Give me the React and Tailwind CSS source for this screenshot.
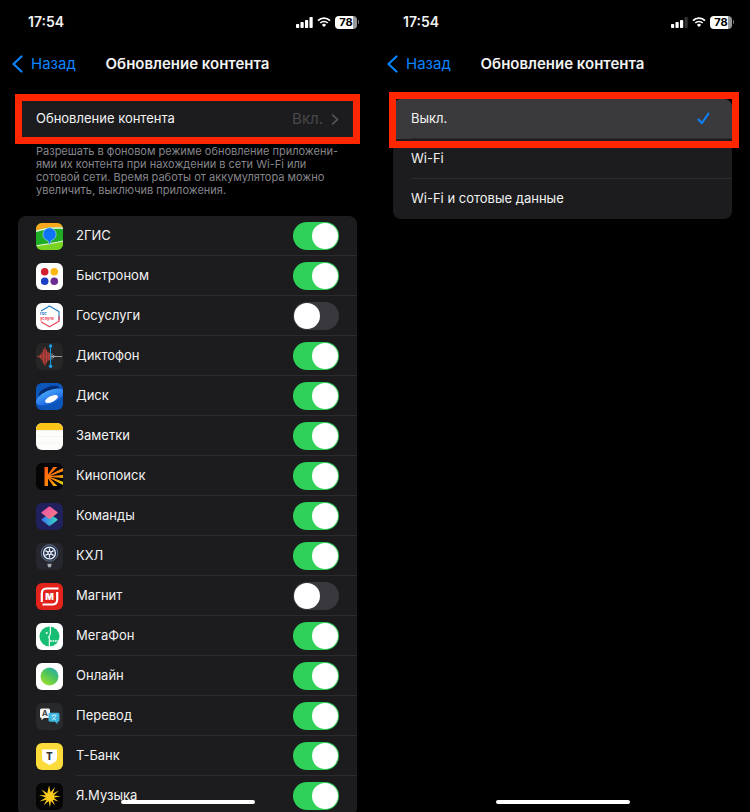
import React, { useState } from 'react';

const TwoGisIcon = () => (
    <svg viewBox="0 0 27 27" className="w-full h-full" aria-hidden="true">
        <rect width="27" height="27" fill="#1fad25" />
        <path d="M0 0h27v4.5C18 3.5 8 4.5 0 7.5z" fill="#fba81c" />
        <path d="M0 7.5C8 4.5 18 3.5 27 4.5v1.500C18 5 8 6 0 9z" fill="#f4f9e6" />
        <path d="M0 23.500C8 21 18 20.500 27 18.500V27H0z" fill="#7ad321" />
        <path d="M0 22.500C8 20.500 18 20 27 17.500v1C18 21 8 21.500 0 23.500z" fill="#f4f9e6" />
        <path d="M13.500 4.800a6.600 6.600 0 0 0-6.600 6.600c0 3.200 2.300 5.200 4.400 6 1.100.4 1.300 1.600 1.400 3.800h1.600c.1-2.200.3-3.400 1.400-3.800 2.100-.8 4.400-2.800 4.400-6a6.600 6.600 0 0 0-6.600-6.600z" fill="#0d74f5" stroke="#a9d4e8" strokeWidth="0.700" />
    </svg>
);

const BystronomIcon = () => (
    <svg viewBox="0 0 27 27" className="w-full h-full" aria-hidden="true">
        <rect width="27" height="27" fill="#fff" />
        <circle cx="8.700" cy="8.700" r="3.800" fill="#d0202f" />
        <circle cx="18.300" cy="8.700" r="3.800" fill="#fbb811" />
        <circle cx="8.700" cy="18.300" r="3.800" fill="#1b3fc4" />
        <circle cx="18.300" cy="18.300" r="3.800" fill="#6b2c91" />
    </svg>
);

const GosuslugiIcon = () => (
    <svg viewBox="0 0 27 27" className="w-full h-full" aria-hidden="true">
        <rect width="27" height="27" fill="#fff" />
        <path d="M5 8l8.500-5 9.500 5.500v9" fill="none" stroke="#1c78c4" strokeWidth="1.100" strokeLinejoin="round" />
        <path d="M23 13v5.200l-9.500 5.500L5 18.800" fill="none" stroke="#ee3f58" strokeWidth="1.100" strokeLinejoin="round" />
        <text x="4" y="11.500" fontSize="4" fontWeight="700" fontFamily="Inter, sans-serif" fill="#1c78c4">гос</text>
        <text x="4" y="16.700" fontSize="4" fontWeight="700" fontFamily="Inter, sans-serif" fill="#ee3f58">услуги</text>
    </svg>
);

const VoiceMemosIcon = () => (
    <svg viewBox="0 0 27 27" className="w-full h-full" aria-hidden="true">
        <rect width="27" height="27" fill="#262626" />
        <path d="M0 13.500h27" stroke="#6b3633" strokeWidth="0.800" />
        <path d="M3 12.500v2M4.500 11.500v4M6 9.500v8M7.500 6.500v14M9 4.500v18M10.500 7v13M12 9v9M13.300 10v7" stroke="#bd403a" strokeWidth="1.200" />
        <path d="M16 10.500v6M17.500 12v3M19 12.800v1.400M14.500 13.500H26" stroke="#a9a9a9" strokeWidth="0.900" />
        <path d="M14.600 3v21" stroke="#1c9ee8" strokeWidth="1" />
        <circle cx="14.600" cy="3" r="1.700" fill="#1c9ee8" />
        <circle cx="14.600" cy="23.300" r="1.700" fill="#1c9ee8" />
    </svg>
);

const DiskIcon = () => (
    <svg viewBox="0 0 27 27" className="w-full h-full" aria-hidden="true">
        <defs>
            <linearGradient id="disk-body" x1="0" y1="0" x2="0" y2="1">
                <stop offset="0" stopColor="#45a2fb" />
                <stop offset="1" stopColor="#1a63df" />
            </linearGradient>
        </defs>
        <rect width="27" height="27" fill="#0c56bb" />
        <ellipse cx="13" cy="8.500" rx="11" ry="4.500" transform="rotate(-20 13 8.500)" fill="#062c73" />
        <ellipse cx="14" cy="14" rx="15" ry="6.600" transform="rotate(-24 14 14)" fill="url(#disk-body)" />
        <ellipse cx="15.500" cy="16" rx="7" ry="3" transform="rotate(-26 15.500 16)" fill="#fff" />
    </svg>
);

const NotesIcon = () => (
    <svg viewBox="0 0 27 27" className="w-full h-full" aria-hidden="true">
        <rect width="27" height="27" fill="#fdfdfb" />
        <rect width="27" height="7" fill="#fcc419" />
        <path d="M0 7.500h27" stroke="#d9d4c4" strokeWidth="0.600" strokeDasharray="1 1" />
        <path d="M0 13.500h27M0 20h27" stroke="#ececea" strokeWidth="0.500" />
    </svg>
);

const KinopoiskIcon = () => (
    <svg viewBox="0 0 27 27" className="w-full h-full" aria-hidden="true">
        <defs>
            <linearGradient id="kinopoisk-rays" gradientUnits="userSpaceOnUse" x1="9" y1="4" x2="27" y2="23">
                <stop offset="0" stopColor="#ff5a12" />
                <stop offset="0.600" stopColor="#ff8a0a" />
                <stop offset="1" stopColor="#d3e80a" />
            </linearGradient>
        </defs>
        <rect width="27" height="27" fill="#050505" />
        <path d="M8.500 4H12v7.400L17.200 4h4.200L13.600 12 27 5v3.200L14.300 13 27 11.900v3.200L14.300 14 27 18.800V22l-13.400-7 7.800 8h-4.200L12 15.600V23H8.500z" fill="url(#kinopoisk-rays)" />
    </svg>
);

const ShortcutsIcon = () => (
    <svg viewBox="0 0 27 27" className="w-full h-full" aria-hidden="true">
        <defs>
            <linearGradient id="shortcuts-top" x1="0" y1="0" x2="1" y2="1">
                <stop offset="0" stopColor="#ee4d9b" />
                <stop offset="0.500" stopColor="#f0689a" />
                <stop offset="1" stopColor="#f5886c" />
            </linearGradient>
            <linearGradient id="shortcuts-bottom" x1="0" y1="0" x2="1" y2="0">
                <stop offset="0" stopColor="#3d70f0" />
                <stop offset="1" stopColor="#35dcc0" />
            </linearGradient>
        </defs>
        <rect width="27" height="27" fill="#20205c" />
        <path d="M6 15.700l6.600-4.200q.9-.6 1.800 0l6.600 4.200q1.200.9 0 1.800l-6.600 5q-.9.600-1.800 0L6 17.500q-1.200-.9 0-1.800z" fill="url(#shortcuts-bottom)" />
        <path d="M6 8.800l6.600-5q.9-.6 1.800 0l6.600 5q1.200.9 0 1.800l-6.600 5q-.9.600-1.800 0L6 10.600q-1.200-.9 0-1.800z" fill="url(#shortcuts-top)" />
    </svg>
);

const KhlIcon = () => (
    <svg viewBox="0 0 27 27" className="w-full h-full" aria-hidden="true">
        <rect width="27" height="27" fill="#26272e" />
        <circle cx="13.500" cy="10" r="8.300" fill="#202f4e" stroke="#77849a" strokeWidth="0.800" />
        <circle cx="13.500" cy="10" r="5.900" fill="#202f4e" stroke="#e8edf4" strokeWidth="1.400" />
        <path d="M13.500 5.200v9.600M9.400 7.600l8.200 4.800M17.600 7.600l-8.200 4.800" stroke="#e8edf4" strokeWidth="1.300" />
        <circle cx="13.500" cy="10" r="2" fill="#e8edf4" />
        <circle cx="13.500" cy="10" r="0.900" fill="#202f4e" />
        <path d="M11.300 20.800h4.400l-.8 3.400h-2.800z" fill="#a9acb3" />
    </svg>
);

const MagnitIcon = () => (
    <svg viewBox="0 0 27 27" className="w-full h-full" aria-hidden="true">
        <rect width="27" height="27" fill="#e2231c" />
        <path d="M5.800 19V10.500q0-5 5-5H22.500" fill="none" stroke="#fff" strokeWidth="2.200" />
        <path d="M21.200 9v7.500q0 5-5 5H6.500" fill="none" stroke="#fff" strokeWidth="2.200" />
        <text x="13.500" y="17" textAnchor="middle" fontSize="9" fontWeight="900" fontFamily="Inter, sans-serif" fill="#fff">М</text>
    </svg>
);

const MegafonIcon = () => (
    <svg viewBox="0 0 27 27" className="w-full h-full" aria-hidden="true">
        <rect width="27" height="27" fill="#fff" />
        <circle cx="13.500" cy="13.500" r="10" fill="#17bd72" />
        <path d="M14.300 3v7.500q-.3 2.500-1.800 3.500l.8 1V24" fill="none" stroke="#fff" strokeWidth="1.100" />
        <path d="M14 18h9.500" stroke="#fff" strokeWidth="1.600" strokeDasharray="1.800 0.700" />
        <circle cx="10.700" cy="10" r="1" fill="#fff" />
    </svg>
);

const OnlineIcon = () => (
    <svg viewBox="0 0 27 27" className="w-full h-full" aria-hidden="true">
        <defs>
            <linearGradient id="online-ball" x1="0.900" y1="0" x2="0.200" y2="1">
                <stop offset="0" stopColor="#20a8b8" />
                <stop offset="0.450" stopColor="#4cc45e" />
                <stop offset="1" stopColor="#a2e02c" />
            </linearGradient>
        </defs>
        <rect width="27" height="27" fill="#fff" />
        <circle cx="13.500" cy="13.500" r="9" fill="url(#online-ball)" />
    </svg>
);

const TranslateIcon = () => (
    <svg viewBox="0 0 27 27" className="w-full h-full" aria-hidden="true">
        <rect width="27" height="27" fill="#28292a" />
        <path d="M5.500 5.500h7q1.500 0 1.500 1.500v6.500q0 1.500-1.500 1.500H8l-2.500 2.300V15Q4 15 4 13.500V7q0-1.500 1.500-1.500z" fill="#f4f4f4" />
        <text x="9" y="13.200" textAnchor="middle" fontSize="8" fontWeight="600" fontFamily="Inter, sans-serif" fill="#333">A</text>
        <path d="M14 9.800h8q1.500 0 1.500 1.500v6q0 1.500-1.500 1.500h-.5v2.400L19 18.800h-5q-1.500 0-1.500-1.500v-6q0-1.500 1.500-1.500z" fill="#3db4dc" />
        <path d="M15.200 12.300h5.600M18 11.200v1.100M16.200 17q3.200-1.500 3.600-4.500M16.200 13.500q1 2.500 3.800 3.500" fill="none" stroke="#d6f2fb" strokeWidth="0.800" />
    </svg>
);

const TBankIcon = () => (
    <svg viewBox="0 0 27 27" className="w-full h-full" aria-hidden="true">
        <rect width="27" height="27" fill="#fbdc3a" />
        <path d="M6 6.500h15v8.200q0 3.300-2.800 4.700L13.500 22l-4.700-2.600Q6 18 6 14.700z" fill="#fff" />
        <text x="13.500" y="16.700" textAnchor="middle" fontSize="10" fontWeight="900" fontFamily="'Roboto', sans-serif" fill="#333">Т</text>
    </svg>
);

const MusicIcon = () => (
    <svg viewBox="0 0 27 27" className="w-full h-full" aria-hidden="true">
        <rect width="27" height="27" fill="#050505" />
        <path
            d="M13 2.500l1.600 6.800L19 4l-2.300 6.500L23 7.500l-5.400 4.900 7 .9-6.900 1.400 4.800 3.800-5.800-1.700 2.300 5.700-4.100-4.600-.9 6.600-1.400-6.400-4.900 4.100 3-5.500-7.200 1.700 6.300-3.800L3 12l6.700.2L5.500 6.500l5.800 3.800z"
            fill="#fccb1e"
        />
    </svg>
);

const APPS = [
    { name: '2ГИС', Icon: TwoGisIcon, on: true },
    { name: 'Быстроном', Icon: BystronomIcon, on: true },
    { name: 'Госуслуги', Icon: GosuslugiIcon, on: false },
    { name: 'Диктофон', Icon: VoiceMemosIcon, on: true },
    { name: 'Диск', Icon: DiskIcon, on: true },
    { name: 'Заметки', Icon: NotesIcon, on: true },
    { name: 'Кинопоиск', Icon: KinopoiskIcon, on: true },
    { name: 'Команды', Icon: ShortcutsIcon, on: true },
    { name: 'КХЛ', Icon: KhlIcon, on: true },
    { name: 'Магнит', Icon: MagnitIcon, on: false },
    { name: 'МегаФон', Icon: MegafonIcon, on: true },
    { name: 'Онлайн', Icon: OnlineIcon, on: true },
    { name: 'Перевод', Icon: TranslateIcon, on: true },
    { name: 'Т-Банк', Icon: TBankIcon, on: true },
    { name: 'Я.Музыка', Icon: MusicIcon, on: true },
];

const MODES = ['Выкл.', 'Wi-Fi', 'Wi-Fi и сотовые данные'];

function StatusBar({ bars }) {
    return (
        <div className="flex h-11 items-center justify-between pl-7 pr-4">
            <span className="text-sm font-semibold">17:54</span>
            <div className="flex items-center gap-1">
                <svg width="17" height="11" viewBox="0 0 17 11" aria-hidden="true">
                    {[4, 6, 8, 11].map((h, i) => (
                        <rect key={h} x={i * 4.5} y={11 - h} width="3.200" height={h} rx="0.800" fill={i < bars ? '#fff' : '#333'} />
                    ))}
                </svg>
                <svg width="14" height="10" viewBox="0 0 14 10" aria-hidden="true">
                    <path d="M1 3.600a8.600 8.600 0 0 1 12 0" fill="none" stroke="#fff" strokeWidth="1.900" />
                    <path d="M3.300 6a5.300 5.300 0 0 1 7.400 0" fill="none" stroke="#fff" strokeWidth="1.700" />
                    <path d="M7 10L4.900 7.900a3 3 0 0 1 4.200 0z" fill="#fff" />
                </svg>
                <div className="flex items-center gap-px">
                    <span className="flex h-[13px] w-[22px] items-center justify-center rounded bg-linear-to-r from-white from-80% to-[#999] to-80% text-[11px] leading-[13px] font-bold text-black">
                        78
                    </span>
                    <span className="h-1 w-px rounded-r bg-[#777]" />
                </div>
            </div>
        </div>
    );
}

function NavBar() {
    return (
        <header className="relative flex h-10 items-center justify-center">
            <a href="#back" className="absolute left-3 flex items-center gap-2 text-[15px] text-[#0a84ff]">
                <svg width="11" height="18" viewBox="0 0 11 18" aria-hidden="true">
                    <path d="M9.500 1.500L1.500 9l8 7.500" fill="none" stroke="currentColor" strokeWidth="2.200" strokeLinecap="round" strokeLinejoin="round" />
                </svg>
                Назад
            </a>
            <h1 className="text-[15px] font-semibold">Обновление контента</h1>
        </header>
    );
}

function Screen({ bars, children }) {
    return (
        <section className="relative h-screen overflow-hidden">
            <StatusBar bars={bars} />
            <NavBar />
            <main className="px-[18px] pt-[15px]">{children}</main>
            <div className="absolute bottom-2 left-1/2 h-1 w-[134px] -translate-x-1/2 rounded-full bg-white" />
        </section>
    );
}

function AppRow({ app, onToggle }) {
    const { name, Icon, on } = app;
    return (
        <li>
            <label className="flex h-10 items-center gap-[13px] pl-[18px]">
                <span className="size-[27px] shrink-0 overflow-hidden rounded-md">
                    <Icon />
                </span>
                <span className="flex h-full flex-1 items-center justify-between border-b border-[#2c2c2e] pr-[18px]">
                    {name}
                    <input
                        type="checkbox"
                        checked={on}
                        onChange={onToggle}
                        className="h-7 w-[46px] appearance-none rounded-full bg-[#39393d] p-px before:block before:size-[26px] before:rounded-full before:bg-white checked:bg-[#30d158] checked:before:ml-[18px]"
                    />
                </span>
            </label>
        </li>
    );
}

export default function App() {
    const [apps, setApps] = useState(APPS);
    const [mode, setMode] = useState(MODES[0]);

    const toggle = (name) => {
        setApps(apps.map((a) => (a.name === name ? { ...a, on: !a.on } : a)));
    };

    return (
        <div className="grid grid-cols-2 bg-black font-['Inter',sans-serif] text-[13px] text-[#f2f2f2]">
            <Screen bars={4}>
                <div className="relative">
                    <button type="button" className="flex h-10 w-full items-center justify-between rounded-lg bg-[#1c1c1e] px-[18px]">
                        Обновление контента
                        <span className="flex items-center gap-2 text-[15px] text-[#48484a]">
                            Вкл.
                            <svg width="8" height="11" viewBox="0 0 8 11" aria-hidden="true">
                                <path d="M1.500 1l5 4.500-5 4.500" fill="none" stroke="#5a5a5e" strokeWidth="1.600" strokeLinecap="round" strokeLinejoin="round" />
                            </svg>
                        </span>
                    </button>
                    {/* Highlight frame */}
                    <div className="pointer-events-none absolute -inset-x-[3px] -inset-y-[5px] border-7 border-[#ff2600]" />
                </div>

                <p className="px-[18px] pt-1.5 text-[11px] leading-[13px] text-[#85858b]">
                    Разрешать в фоновом режиме обновление приложени-
                    <br />
                    ями их контента при нахождении в сети Wi-Fi или
                    <br />
                    сотовой сети. Время работы от аккумулятора можно
                    <br />
                    увеличить, выключив приложения.
                </p>

                <ul className="mt-[19px] overflow-hidden rounded-lg bg-[#1c1c1e]">
                    {apps.map((app) => (
                        <AppRow key={app.name} app={app} onToggle={() => toggle(app.name)} />
                    ))}
                </ul>
            </Screen>

            <Screen bars={3}>
                <div className="relative">
                    <ul className="overflow-hidden rounded-lg bg-[#1c1c1e]">
                        {MODES.map((m, i) => (
                            <li key={m} className={mode === m ? 'bg-[#3a3a3c]' : ''}>
                                <button type="button" onClick={() => setMode(m)} className="flex h-10 w-full pl-[18px]">
                                    <span
                                        className={`flex h-full flex-1 items-center justify-between pr-[22px] ${i < MODES.length - 1 ? 'border-b border-[#2c2c2e]' : ''}`}
                                    >
                                        {m}
                                        {mode === m && (
                                            <svg width="13" height="13" viewBox="0 0 13 13" aria-hidden="true">
                                                <path d="M1.500 7.500L4.800 11.200 11.500 1.500" fill="none" stroke="#0a84ff" strokeWidth="2" strokeLinecap="round" strokeLinejoin="round" />
                                            </svg>
                                        )}
                                    </span>
                                </button>
                            </li>
                        ))}
                    </ul>
                    {/* Highlight frame */}
                    <div className="pointer-events-none absolute -left-1 -right-[7px] -top-[7px] h-14 border-7 border-[#ff2600]" />
                </div>
            </Screen>
        </div>
    );
}
